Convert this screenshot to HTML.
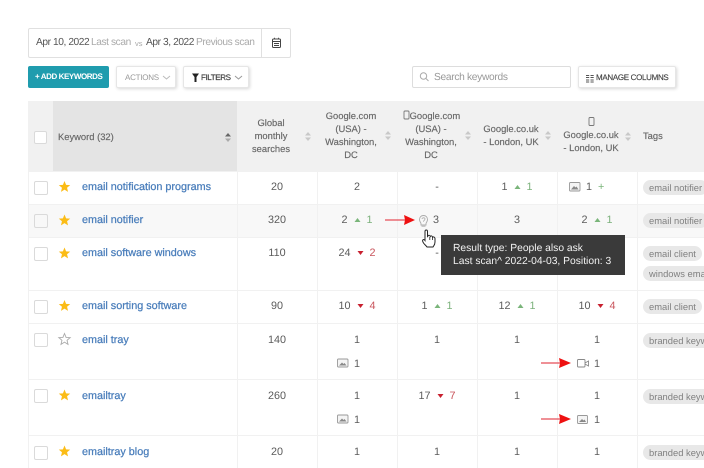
<!DOCTYPE html>
<html><head><meta charset="utf-8">
<style>
html,body{margin:0;padding:0;background:#fff}
#p{position:relative;width:704px;height:468px;overflow:hidden;font-family:"Liberation Sans",Arial,sans-serif;font-size:10.8px;color:#5a5a5a;filter:blur(.25px);text-rendering:geometricPrecision}
#p div{position:absolute;box-sizing:border-box}
.t{white-space:nowrap;line-height:14px}
.d{font-size:10.2px;letter-spacing:-.42px;top:36px}
.c{white-space:nowrap;line-height:14px;transform:translateX(-50%)}
.h{text-align:center;font-size:9.4px;line-height:13.2px;color:#666;-webkit-text-stroke:.15px #666;white-space:nowrap;transform:translateX(-50%)}
.k{color:#4a7ebb;font-size:10.8px;-webkit-text-stroke:.25px #4a7ebb;white-space:nowrap;line-height:14px;left:82px}
.g{color:#7ab07a}.r{color:#c8535a}
.cb{left:34px;width:14px;height:14px;border:1px solid #dadada;border-radius:2px;background:#fff}
.pill{left:643px;height:15px;border-radius:8px;background:#e8e8e8;color:#808080;font-size:9.4px;line-height:15px;padding:0 6px;white-space:nowrap}
.btn{height:22px;border:1px solid #e6e6e6;border-radius:2px;background:#fff;box-shadow:1px 1px 3px rgba(0,0,0,.16);top:66px;font-size:8px;line-height:22px;white-space:nowrap}
.ln{background:#f1f1f1}
.up{display:inline-block;width:0;height:0;border-left:3.5px solid transparent;border-right:3.5px solid transparent;border-bottom:4px solid #7ab57a;margin:0 6.5px 1px 6.5px;vertical-align:middle}
.dn{display:inline-block;width:0;height:0;border-left:3.5px solid transparent;border-right:3.5px solid transparent;border-top:4px solid #c8202f;margin:0 6.5px 1px 6.5px;vertical-align:middle}
svg{position:absolute;left:0;top:0}
</style></head><body><div id="p">

<div style="left:28px;top:28px;width:263px;height:30px;border:1px solid #e0e0e0;border-radius:2px"></div>
<div style="left:261px;top:28px;width:1px;height:30px;background:#e0e0e0"></div>
<div class="t d" style="left:36px;color:#555">Apr 10, 2022</div>
<div class="t d" style="left:91px;color:#aaa">Last scan</div>
<div class="t" style="left:135px;top:37px;font-size:7.5px;color:#aaa">vs</div>
<div class="t d" style="left:146px;color:#555">Apr 3, 2022</div>
<div class="t d" style="left:196px;color:#aaa">Previous scan</div>

<div style="left:28px;top:66px;width:81px;height:22px;background:#1f9cae;border-radius:2px;color:#fff;font-size:8px;font-weight:bold;letter-spacing:-.42px;line-height:22px;padding-left:7px;white-space:nowrap">+ ADD KEYWORDS</div>
<div class="btn" style="left:116px;width:60px;color:#999;padding-left:8px;letter-spacing:-.25px">ACTIONS</div>
<div class="btn" style="left:183px;width:66px;color:#444;padding-left:17px;-webkit-text-stroke:.2px #444;letter-spacing:-.4px">FILTERS</div>
<div style="left:412px;top:66px;width:159px;height:22px;border:1px solid #ddd;border-radius:2px"></div>
<div class="t" style="left:434px;top:71px;font-size:10.2px;letter-spacing:-.3px;color:#999">Search keywords</div>
<div class="btn" style="left:578px;width:98px;color:#444;padding-left:17px;-webkit-text-stroke:.15px #444;letter-spacing:-.32px">MANAGE COLUMNS</div>

<div style="left:28px;top:101px;width:676px;height:70px;background:#f1f1f1"></div>
<div style="left:53px;top:101px;width:184px;height:70px;background:#e4e4e4"></div>
<div class="cb" style="top:131px;background:#fff;width:13px;height:13px"></div>
<div class="t" style="left:58px;top:130px;font-size:9.4px;color:#666;-webkit-text-stroke:.15px #666">Keyword (32)</div>
<div class="h" style="left:271px;top:116px">Global<br>monthly<br>searches</div>
<div class="h" style="left:351px;top:108.500px">Google.com<br>(USA) -<br>Washington,<br>DC</div>
<div class="h" style="left:431px;top:108.500px">&nbsp;&nbsp;&nbsp;Google.com<br>(USA) -<br>Washington,<br>DC</div>
<div class="h" style="left:511px;top:122px">Google.co.uk<br>- London, UK</div>
<div class="h" style="left:591px;top:128px">Google.co.uk<br>- London, UK</div>
<div class="t" style="left:643px;top:129px;font-size:9.4px;color:#666;-webkit-text-stroke:.15px #666">Tags</div>

<div style="left:28px;top:204px;width:676px;height:33px;background:#f8f8f8"></div>
<div class="ln" style="left:28px;top:171px;width:676px;height:1px"></div>
<div class="ln" style="left:28px;top:204px;width:676px;height:1px"></div>
<div class="ln" style="left:28px;top:237px;width:676px;height:1px"></div>
<div class="ln" style="left:28px;top:290px;width:676px;height:1px"></div>
<div class="ln" style="left:28px;top:323px;width:676px;height:1px"></div>
<div class="ln" style="left:28px;top:379px;width:676px;height:1px"></div>
<div class="ln" style="left:28px;top:435px;width:676px;height:1px"></div>
<div class="ln" style="left:28px;top:171px;width:1px;height:297px"></div>
<div class="ln" style="left:237px;top:101px;width:1px;height:367px"></div>
<div class="ln" style="left:317px;top:101px;width:1px;height:367px"></div>
<div class="ln" style="left:397px;top:101px;width:1px;height:367px"></div>
<div class="ln" style="left:477px;top:101px;width:1px;height:367px"></div>
<div class="ln" style="left:557px;top:101px;width:1px;height:367px"></div>
<div class="ln" style="left:637px;top:101px;width:1px;height:367px"></div>

<div class="cb" style="top:181px"></div>
<div class="cb" style="top:214px;background:#f8f8f8"></div>
<div class="cb" style="top:247px"></div>
<div class="cb" style="top:300px"></div>
<div class="cb" style="top:333px"></div>
<div class="cb" style="top:389px"></div>
<div class="cb" style="top:446px"></div>

<div class="k" style="top:180px">email notification programs</div>
<div class="k" style="top:213px">email notifier</div>
<div class="k" style="top:246px">email software windows</div>
<div class="k" style="top:299px">email sorting software</div>
<div class="k" style="top:333px">email tray</div>
<div class="k" style="top:389px">emailtray</div>
<div class="k" style="top:445px">emailtray blog</div>

<div class="c" style="left:277px;top:180px">20</div>
<div class="c" style="left:277px;top:213px">320</div>
<div class="c" style="left:277px;top:246px">110</div>
<div class="c" style="left:277px;top:299px">90</div>
<div class="c" style="left:277px;top:333px">140</div>
<div class="c" style="left:277px;top:389px">260</div>
<div class="c" style="left:277px;top:445px">20</div>

<div class="c" style="left:357px;top:180px">2</div>
<div class="c" style="left:357px;top:213px">2<i class="up"></i><span class="g">1</span></div>
<div class="c" style="left:357px;top:246px">24<i class="dn"></i><span class="r">2</span></div>
<div class="c" style="left:357px;top:299px">10<i class="dn"></i><span class="r">4</span></div>
<div class="c" style="left:357px;top:333px">1</div>
<div class="t" style="left:354px;top:357px">1</div>
<div class="c" style="left:357px;top:389px">1</div>
<div class="t" style="left:354px;top:413px">1</div>
<div class="c" style="left:357px;top:445px">1</div>

<div class="c" style="left:437px;top:180px">-</div>
<div class="t" style="left:433px;top:213px">3</div>
<div class="c" style="left:437px;top:246px">-</div>
<div class="c" style="left:437px;top:299px">1<i class="up"></i><span class="g">1</span></div>
<div class="c" style="left:437px;top:333px">1</div>
<div class="c" style="left:437px;top:389px">17<i class="dn"></i><span class="r">7</span></div>
<div class="c" style="left:437px;top:445px">1</div>

<div class="c" style="left:517px;top:180px">1<i class="up"></i><span class="g">1</span></div>
<div class="c" style="left:517px;top:213px">3</div>
<div class="c" style="left:517px;top:299px">12<i class="up"></i><span class="g">1</span></div>
<div class="c" style="left:517px;top:333px">1</div>
<div class="c" style="left:517px;top:389px">1</div>
<div class="c" style="left:517px;top:445px">1</div>

<div class="t" style="left:586px;top:180px">1</div>
<div class="t" style="left:598px;top:180px;color:#7ab57a">+</div>
<div class="c" style="left:597px;top:213px">2<i class="up"></i><span class="g">1</span></div>
<div class="c" style="left:597px;top:299px">10<i class="dn"></i><span class="r">4</span></div>
<div class="c" style="left:597px;top:333px">1</div>
<div class="t" style="left:594px;top:357px">1</div>
<div class="c" style="left:597px;top:389px">1</div>
<div class="t" style="left:594px;top:413px">1</div>
<div class="c" style="left:597px;top:445px">1</div>

<div class="pill" style="top:180px">email notifier</div>
<div class="pill" style="top:213px">email notifier</div>
<div class="pill" style="top:246px">email client</div>
<div class="pill" style="top:266px">windows email</div>
<div class="pill" style="top:299px">email client</div>
<div class="pill" style="top:333px">branded keywords</div>
<div class="pill" style="top:389px">branded keywords</div>
<div class="pill" style="top:445px">branded keywords</div>

<svg width="704" height="468" viewBox="0 0 704 468" fill="none">
<defs>
<path id="st" d="M0-6 1.6-2.1 5.7-1.850 2.550.8 3.530 4.850 0 2.650-3.530 4.850-2.550.8-5.700-1.850-1.600-2.100Z"/>
</defs>
<!-- calendar -->
<rect x="272.500" y="39" width="8" height="8.500" rx="1" stroke="#444" stroke-width="1"/>
<path d="M272.500 41.500H280.500M274.500 37.800V39M278.500 37.800V39M274 43.500H279M274 45.500H279" stroke="#444" stroke-width=".9"/>
<!-- chevrons -->
<path d="M163 76l3.500 3 3.500-3" stroke="#bbb"/>
<path d="M235 76l3.500 3 3.500-3" stroke="#999"/>
<path d="M192 73.500H199L196.500 77V82H194.500V77Z" fill="#222"/>
<!-- search -->
<circle cx="423.500" cy="76" r="3.200" stroke="#aaa"/><path d="M426 78.500 428.500 81" stroke="#aaa"/>
<!-- manage icon -->
<path d="M586 75.500h3.200M590.500 75.500h3.200M586 77.500h3.200M590.500 77.500h3.200M586 80h3.200M590.500 80h3.200M586 82h3.200M590.500 82h3.200" stroke="#555" stroke-width="1"/>
<!-- sort arrows -->
<path d="M225 136.500 228 133 231 136.500Z" fill="#666"/><path d="M225 138.500 228 142 231 138.500Z" fill="#aaa"/>
<path d="M305 135.500 308 132 311 135.500Z" fill="#c8c8c8"/><path d="M305 137.500 308 141 311 137.500Z" fill="#c8c8c8"/>
<path d="M385 134.500 388 131 391 134.500Z" fill="#c8c8c8"/><path d="M385 136.500 388 140 391 136.500Z" fill="#c8c8c8"/>
<path d="M465 134.500 468 131 471 134.500Z" fill="#c8c8c8"/><path d="M465 136.500 468 140 471 136.500Z" fill="#c8c8c8"/>
<path d="M545 134.500 548 131 551 134.500Z" fill="#c8c8c8"/><path d="M545 136.500 548 140 551 136.500Z" fill="#c8c8c8"/>
<path d="M625 135.500 628 132 631 135.500Z" fill="#c8c8c8"/><path d="M625 137.500 628 141 631 137.500Z" fill="#c8c8c8"/>
<!-- phone icons -->
<rect x="404" y="111" width="5" height="8" rx="1" stroke="#777" stroke-width=".9"/>
<rect x="589" y="117.500" width="5" height="8" rx="1" stroke="#777" stroke-width=".9"/>
<!-- stars -->
<g fill="#fbbc16">
<use href="#st" x="64.500" y="187"/><use href="#st" x="64.500" y="220.500"/><use href="#st" x="64.500" y="253.500"/><use href="#st" x="64.500" y="306"/><use href="#st" x="64.500" y="395.500"/><use href="#st" x="64.500" y="451.500"/>
</g>
<use href="#st" x="64.500" y="339.500" stroke="#aaa" stroke-width=".9"/>
<!-- image icons -->
<g stroke="#999" stroke-width=".9" fill="#f4f4f4">
<rect x="569.500" y="182.500" width="10.500" height="8.500" rx="1"/>
<rect x="337.500" y="359" width="10.500" height="8" rx="1"/>
<rect x="337.500" y="415" width="10.500" height="8" rx="1"/>
<rect x="577.500" y="415.500" width="10" height="8" rx="1"/>
</g>
<rect x="577.500" y="359.500" width="7.500" height="7.500" rx="1" stroke="#888" stroke-width=".9"/>
<g fill="#888">
<path d="M571 189.500 574 186 575.500 187.500 576.500 186.500 578.500 189.500Z"/>
<path d="M339 365.500 342 362.500 343.500 364 344.500 363 346.500 365.500Z"/>
<path d="M339 421.500 342 418.500 343.500 420 344.500 419 346.500 421.500Z"/>
<path d="M579 422 582 419 583.500 420.500 584.500 419.500 586 422Z"/>
</g>
<path d="M585 363 588.500 361V366L585 364" stroke="#888" stroke-width=".9"/>
<!-- question bulb -->
<path d="M421 223.500C420.500 222 419.500 221.500 419.500 219.500C419.500 217 421.300 215.500 423.500 215.500C425.700 215.500 427.500 217 427.500 219.500C427.500 221.500 426.500 222 426 223.500V225H421Z" stroke="#aaa" stroke-width=".9"/>
<path d="M422 219C422 217.300 425.500 217.500 425 219.200C424.800 220.200 423.500 220.300 423.500 221.800M421.500 226.200H425.500" stroke="#aaa" stroke-width=".8"/>
<!-- arrows -->
<g stroke="none">
<rect x="385" y="219.300" width="21" height="1.400" fill="#e8606a"/>
<path d="M404 215 415 220 404 225 405 220Z" fill="#ee1111"/>
<rect x="541" y="362.300" width="21" height="1.400" fill="#e8606a"/>
<path d="M559 358 571 363 559 368 560 363Z" fill="#ee1111"/>
<rect x="541" y="418.300" width="21" height="1.400" fill="#e8606a"/>
<path d="M559 414 571 419 559 424 560 419Z" fill="#ee1111"/>
</g>
</svg>

<div style="left:441px;top:235px;width:184px;height:40px;background:#3a3a3a;color:#f2f2f2;font-size:10.300px;line-height:13.300px;padding:6.500px 0 0 12px;white-space:nowrap">Result type: People also ask<br>Last scan^ 2022-04-03, Position: 3</div>

<svg width="704" height="468" viewBox="0 0 704 468" fill="none">
<path d="M425 240V231.500C425 229.500 427.500 229.500 427.500 231.500V236.500L428 236C428.500 235 430 235 430.300 236.500C431 235.500 432.300 235.800 432.500 237.200C433.500 236.500 434.800 237 435 238.500V242C435 245 433.500 246 433 247H427C426 245.500 424.500 244.500 423.500 243C422.500 241.500 422.200 240.500 423 239.800C423.800 239.200 424.500 239.800 425 240.500Z" fill="#fff" stroke="#222" stroke-width="1"/>
<path d="M429.800 237V240M432.500 237.500V240" stroke="#222" stroke-width=".8"/>
</svg>
</div></body></html>
